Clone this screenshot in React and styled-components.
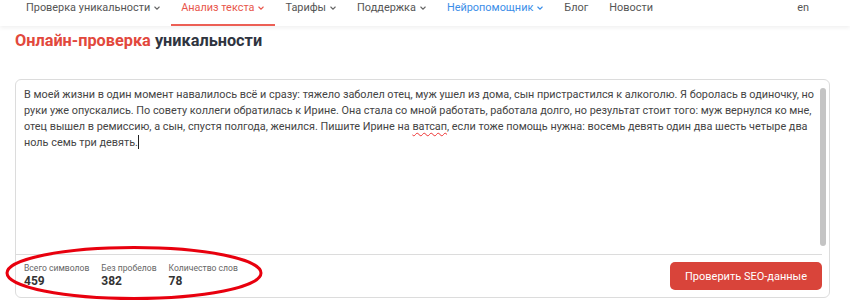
import React from "react";
import styled, { createGlobalStyle } from "styled-components";

const GlobalStyle = createGlobalStyle`
  body {
    margin: 0;
    background: #fff;
    font-family: Roboto, "Liberation Sans", sans-serif;
  }
`;

const navItems = [
  { label: "Проверка уникальности", menu: true },
  { label: "Анализ текста", menu: true, active: true },
  { label: "Тарифы", menu: true },
  { label: "Поддержка", menu: true },
  { label: "Нейропомощник", menu: true, accent: true },
  { label: "Блог" },
  { label: "Новости" },
];

const stats = [
  { label: "Всего символов", value: 459 },
  { label: "Без пробелов", value: 382 },
  { label: "Количество слов", value: 78 },
];

const Chevron = ({ color }) => (
  <svg width="6" height="8" viewBox="0 0 6 8" fill="none">
    <path d="M0.8 3l2.2 2.2L5.2 3" stroke={color} strokeWidth="1.1" strokeLinecap="round" />
  </svg>
);

const App = () => {
  return (
    <Page>
      <GlobalStyle />
      <Nav>
        <NavList>
          {navItems.map((item) => (
            <NavItem key={item.label} $active={item.active} $accent={item.accent}>
              {item.label}
              {item.menu && (
                <Chevron color={item.active ? "#e8564c" : item.accent ? "#3b8ee8" : "#666"} />
              )}
            </NavItem>
          ))}
        </NavList>
        <Lang>en</Lang>
      </Nav>

      <Title>
        <span>Онлайн-проверка</span> уникальности
      </Title>

      <Editor>
        <TextRow>
          <TextBody>
            В моей жизни в один момент навалилось всё и сразу: тяжело заболел отец, муж ушел из
            дома, сын пристрастился к алкоголю. Я боролась в одиночку, но руки уже опускались. По
            совету коллеги обратилась к Ирине. Она стала со мной работать, работала долго, но
            результат стоит того: муж вернулся ко мне, отец вышел в ремиссию, а сын, спустя
            полгода, женился. Пишите Ирине на <Misspelled>ватсап</Misspelled>, если тоже помощь
            нужна: восемь девять один два шесть четыре два ноль семь три девять.
            <Caret />
          </TextBody>
          <ScrollTrack>
            <ScrollThumb />
          </ScrollTrack>
        </TextRow>
        <Footer>
          <Stats>
            {stats.map((s) => (
              <Stat key={s.label}>
                <StatLabel>{s.label}</StatLabel>
                <StatValue>{s.value}</StatValue>
              </Stat>
            ))}
          </Stats>
          <CheckButton>Проверить SEO-данные</CheckButton>
        </Footer>
        <Marker viewBox="0 0 270 60" width="270" height="60">
          <ellipse cx="129" cy="28" rx="127" ry="25.5" fill="none" stroke="#e8000e" strokeWidth="3" />
        </Marker>
      </Editor>
    </Page>
  );
};

export default App;

const Page = styled.div`
  width: 850px;
  height: 303px;
  overflow: hidden;
`;

const Nav = styled.nav`
  display: flex;
  align-items: stretch;
  justify-content: space-between;
  height: 26px;
  padding: 0 41px 0 15.5px;
  box-shadow: 0 2px 4px rgba(0, 0, 0, 0.06);
`;

const NavList = styled.ul`
  display: flex;
  margin: 0;
  padding: 0;
  list-style: none;
`;

const NavItem = styled.li`
  display: flex;
  align-items: flex-start;
  gap: 4px;
  padding: 0 10.5px;
  font-size: 10.9px;
  line-height: 15px;
  color: ${(p) => (p.$active ? "#e8564c" : p.$accent ? "#3b8ee8" : "#555")};
  border-bottom: 2px solid ${(p) => (p.$active ? "#ec5f55" : "transparent")};

  svg {
    margin-top: 4px;
  }
`;

const Lang = styled.div`
  font-size: 10.9px;
  line-height: 15px;
  color: #555;
`;

const Title = styled.h1`
  margin: 5px 0 0 15px;
  font-size: 16.3px;
  line-height: 20px;
  font-weight: 700;
  color: #2f3440;

  span {
    color: #e2483c;
  }
`;

const Editor = styled.div`
  position: relative;
  margin: 28px 20px 0 15px;
  height: 217px;
  border: 1px solid #dcdcdc;
  border-radius: 6px;
  display: flex;
  flex-direction: column;
`;

const TextRow = styled.div`
  flex: 1;
  display: flex;
  min-height: 0;
`;

const TextBody = styled.div`
  flex: 1;
  padding: 7px 0 0 8px;
  font-size: 10.85px;
  line-height: 16px;
  color: #444;
`;

const Misspelled = styled.span`
  text-decoration: underline wavy #e33;
  text-decoration-thickness: 1px;
  text-underline-offset: 2px;
`;

const Caret = styled.span`
  display: inline-block;
  width: 1px;
  height: 14px;
  background: #222;
  vertical-align: -3px;
`;

const ScrollTrack = styled.div`
  width: 8px;
  padding: 8px 1px 8px 0;
`;

const ScrollThumb = styled.div`
  width: 6px;
  height: 100%;
  border-radius: 3px;
  background: #c4c4c4;
`;

const Footer = styled.div`
  display: flex;
  align-items: center;
  justify-content: space-between;
  height: 42px;
  margin-right: 7px;
  padding: 0 0 0 8px;
  border-top: 1px solid #dcdcdc;
`;

const Stats = styled.div`
  display: flex;
  gap: 12px;
`;

const Stat = styled.div`
  display: flex;
  flex-direction: column;
`;

const StatLabel = styled.span`
  font-size: 8.6px;
  line-height: 11px;
  color: #666;
`;

const StatValue = styled.span`
  font-size: 12px;
  line-height: 15px;
  font-weight: 700;
  color: #333;
`;

const CheckButton = styled.button`
  height: 28px;
  padding: 0 15px;
  border: none;
  border-radius: 5px;
  background: #d9443a;
  color: #fff;
  font-family: inherit;
  font-size: 11px;
`;

const Marker = styled.svg`
  position: absolute;
  left: -11px;
  top: 165px;
  pointer-events: none;
`;
